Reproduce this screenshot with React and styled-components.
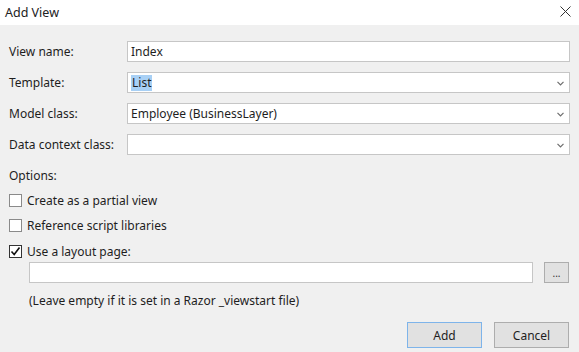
import React from 'react';
import styled, { createGlobalStyle } from 'styled-components';

const GlobalStyle = createGlobalStyle`
html, body {
  margin: 0;
  padding: 0;
  background: #f0f0f0;
}
body {
  font-family: "Noto Sans", "Open Sans", sans-serif;
  font-size: 12px;
  color: #1e1e1e;
}
`;

const Dialog = styled.div`
width: 579px;
height: 352px;
display: flex;
flex-direction: column;
background: #f0f0f0;
overflow: hidden;
`;

const TitleBar = styled.div`
height: 25px;
display: flex;
align-items: center;
justify-content: space-between;
background: #ffffff;
padding: 0 8px 0 5px;
font-size: 12.5px;
color: #222;
`;

const CloseButton = styled.span`
display: flex;
align-items: center;
margin-top: -3px;
`;

const Body = styled.div`
display: flex;
flex-direction: column;
padding: 16px 9px 0 9px;
`;

const FormGrid = styled.div`
display: grid;
grid-template-columns: 118px 1fr;
row-gap: 10px;
align-items: center;
`;

const Label = styled.label`
line-height: 21px;
`;

const Field = styled.div`
position: relative;
height: 21px;
box-sizing: border-box;
border: 1px solid #c6c6c6;
background: #ffffff;
display: flex;
align-items: center;
padding-left: 3px;
flex: 1;
`;

const Selected = styled.span`
background: #a8d0f5;
padding: 0 1px;
line-height: 16px;
`;

const Chevron = styled.svg`
position: absolute;
right: 5px;
top: 8px;
`;

const SectionLabel = styled.div`
margin-top: 13px;
line-height: 16px;
`;

const CheckRow = styled.label`
display: flex;
align-items: center;
gap: 5px;
height: 16px;
margin-top: ${(p) => p.$top}px;
`;

const Box = styled.span`
width: 13px;
height: 13px;
box-sizing: border-box;
border: 1px solid ${(p) => (p.$checked ? '#333' : '#8a8a8a')};
background: #fff;
display: flex;
align-items: center;
justify-content: center;
`;

const LayoutRow = styled.div`
display: flex;
align-items: center;
gap: 11px;
margin: 3px 1px 0 20px;
`;

const SmallButton = styled.button`
width: 25px;
height: 21px;
box-sizing: border-box;
border: 1px solid #adadad;
background: #e1e1e1;
padding: 0;
font: inherit;
font-size: 10px;
line-height: 10px;
color: #333;
`;

const Note = styled.div`
margin: 10px 0 0 20px;
line-height: 16px;
`;

const Footer = styled.div`
display: flex;
justify-content: flex-end;
gap: 12px;
margin-top: 13px;
padding-right: 1px;
`;

const Button = styled.button`
width: 75px;
height: 26px;
box-sizing: border-box;
border: 1px solid ${(p) => (p.$primary ? '#7eb4ea' : '#adadad')};
background: #e1e1e1;
font: inherit;
font-size: 12px;
color: #1e1e1e;
padding: 0;
`;

const ChevronIcon = () => (
  <Chevron width="7" height="5" viewBox="0 0 7 5">
    <path d="M0.5 0.8 L3.5 3.8 L6.5 0.8" fill="none" stroke="#6d6d6d" strokeWidth="1.2" />
  </Chevron>
);

const Check = () => (
  <svg width="11" height="11" viewBox="0 0 11 11">
    <path d="M1.5 5.5 L4.2 8.5 L9.5 1.5" fill="none" stroke="#111" strokeWidth="1.6" />
  </svg>
);

const App = () => (
  <Dialog>
    <GlobalStyle />
    <TitleBar>
      <span>Add View</span>
      <CloseButton>
        <svg width="11" height="11" viewBox="0 0 11 11">
          <path d="M0.5 0.5 L10.5 10.5 M10.5 0.5 L0.5 10.5" stroke="#333" strokeWidth="1" />
        </svg>
      </CloseButton>
    </TitleBar>
    <Body>
      <FormGrid>
        <Label>View name:</Label>
        <Field>Index</Field>
        <Label>Template:</Label>
        <Field>
          <Selected>List</Selected>
          <ChevronIcon />
        </Field>
        <Label>Model class:</Label>
        <Field>
          Employee (BusinessLayer)
          <ChevronIcon />
        </Field>
        <Label>Data context class:</Label>
        <Field>
          <ChevronIcon />
        </Field>
      </FormGrid>
      <SectionLabel>Options:</SectionLabel>
      <CheckRow $top={8}>
        <Box />
        Create as a partial view
      </CheckRow>
      <CheckRow $top={9}>
        <Box />
        Reference script libraries
      </CheckRow>
      <CheckRow $top={10}>
        <Box $checked>
          <Check />
        </Box>
        Use a layout page:
      </CheckRow>
      <LayoutRow>
        <Field />
        <SmallButton>...</SmallButton>
      </LayoutRow>
      <Note>(Leave empty if it is set in a Razor _viewstart file)</Note>
      <Footer>
        <Button $primary>Add</Button>
        <Button>Cancel</Button>
      </Footer>
    </Body>
  </Dialog>
);

export default App;
